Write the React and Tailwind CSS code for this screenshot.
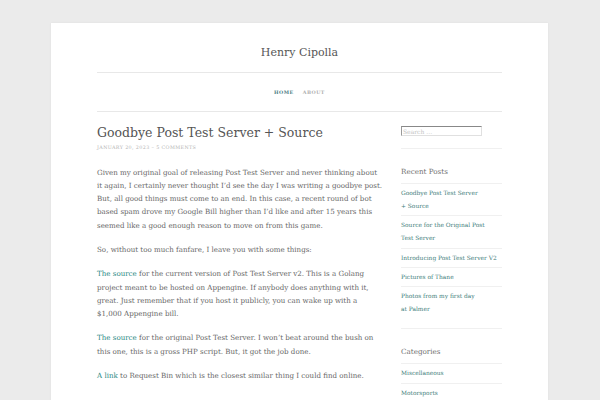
import React from 'react';

const recent = [
  'Goodbye Post Test Server +\u00a0Source',
  'Source for the Original Post Test\u00a0Server',
  'Introducing Post Test Server\u00a0V2',
  'Pictures of\u00a0Thane',
  'Photos from my first day at\u00a0Palmer',
];

const categories = ['Miscellaneous', 'Motorsports'];

function Widget({ title, items }) {
  return (
    <section className="border-b border-[#f0f0f0] pt-[16px] pb-[10px]">
      <h2 className="mb-[4px] text-[7.2px] leading-[14px] text-[#707070]">{title}</h2>
      <ul>
        {items.map((t) => (
          <li key={t} className="border-t border-[#f0f0f0] pt-[3px] pb-[2.3px] text-[5.9px] leading-[13px]">
            <a href="#" className="text-[#3f807c]">{t}</a>
          </li>
        ))}
      </ul>
    </section>
  );
}

export default function App() {
  return (
    <div className="min-h-screen bg-[#ebebeb] pt-[23px]" style={{ fontFamily: '"DejaVu Serif", serif' }}>
      <div className="ml-[51px] w-[497px] bg-white px-[46px] pb-[40px] shadow-[0_0_2px_rgba(0,0,0,0.06)]">
        {/* header */}
        <header className="pt-[22px]">
          <h1 className="text-center text-[11px] leading-[16px] text-[#555]">Henry Cipolla</h1>
          <nav className="mt-[11px] flex justify-center gap-[9px] border-y border-[#e8e8e8] py-[15px] text-[4.8px] leading-[8px] font-bold uppercase tracking-[0.1em]">
            <a href="#" className="text-[#4b7d84]">Home</a>
            <a href="#" className="text-[#b0b0b0]">About</a>
          </nav>
        </header>

        <div className="flex gap-[20px]">
          {/* main column */}
          <main className="w-[284px] pt-[11px]">
            <h2 className="text-[12.5px] leading-[20px] text-[#555]">Goodbye Post Test Server + Source</h2>
            <p className="mt-[1px] text-[4.8px] leading-[8px] uppercase tracking-[0.08em] text-[#b4b4b4]">
              January 20, 2023 – 5 Comments
            </p>
            <div className="mt-[13.5px] text-[7.1px] leading-[13.3px] text-[#676767]">
              <p className="mb-[11px] whitespace-nowrap">
                Given my original goal of releasing Post Test Server and never thinking about<br />
                it again, I certainly never thought I’d see the day I was writing a goodbye post.<br />
                But, all good things must come to an end. In this case, a recent round of bot<br />
                based spam drove my Google Bill higher than I’d like and after 15 years this<br />
                seemed like a good enough reason to move on from this game.
              </p>
              <p className="mb-[11px]">So, without too much fanfare, I leave you with some things:</p>
              <p className="mb-[11px]">
                <a href="#" className="text-[#2b8a84]">The source</a> for the current version of Post Test Server v2. This is a Golang project meant to be hosted on Appengine. If anybody does anything with it, great. Just remember that if you host it publicly, you can wake up with a $1,000 Appengine bill.
              </p>
              <p className="mb-[11px]">
                <a href="#" className="text-[#2b8a84]">The source</a> for the original Post Test Server. I won’t beat around the bush on this one, this is a gross PHP script. But, it got the job done.
              </p>
              <p className="mb-[11px]">
                <a href="#" className="text-[#2b8a84]">A link</a> to Request Bin which is the closest similar thing I could find online.
              </p>
            </div>
          </main>

          {/* sidebar */}
          <aside className="w-[101px] pt-[14px]">
            <div className="border-b border-[#f0f0f0] pb-[12px]">
              <input
                type="search"
                placeholder="Search …"
                className="block h-[10px] w-[81px] border border-t-[#888] border-l-[#999] border-r-[#e0e0e0] border-b-[#e0e0e0] px-[1px] text-[6px] leading-[8px] text-[#666] placeholder:text-[#c4c4c4] outline-none"
              />
            </div>
            <Widget title="Recent Posts" items={recent} />
            <Widget title="Categories" items={categories} />
          </aside>
        </div>
      </div>
    </div>
  );
}
